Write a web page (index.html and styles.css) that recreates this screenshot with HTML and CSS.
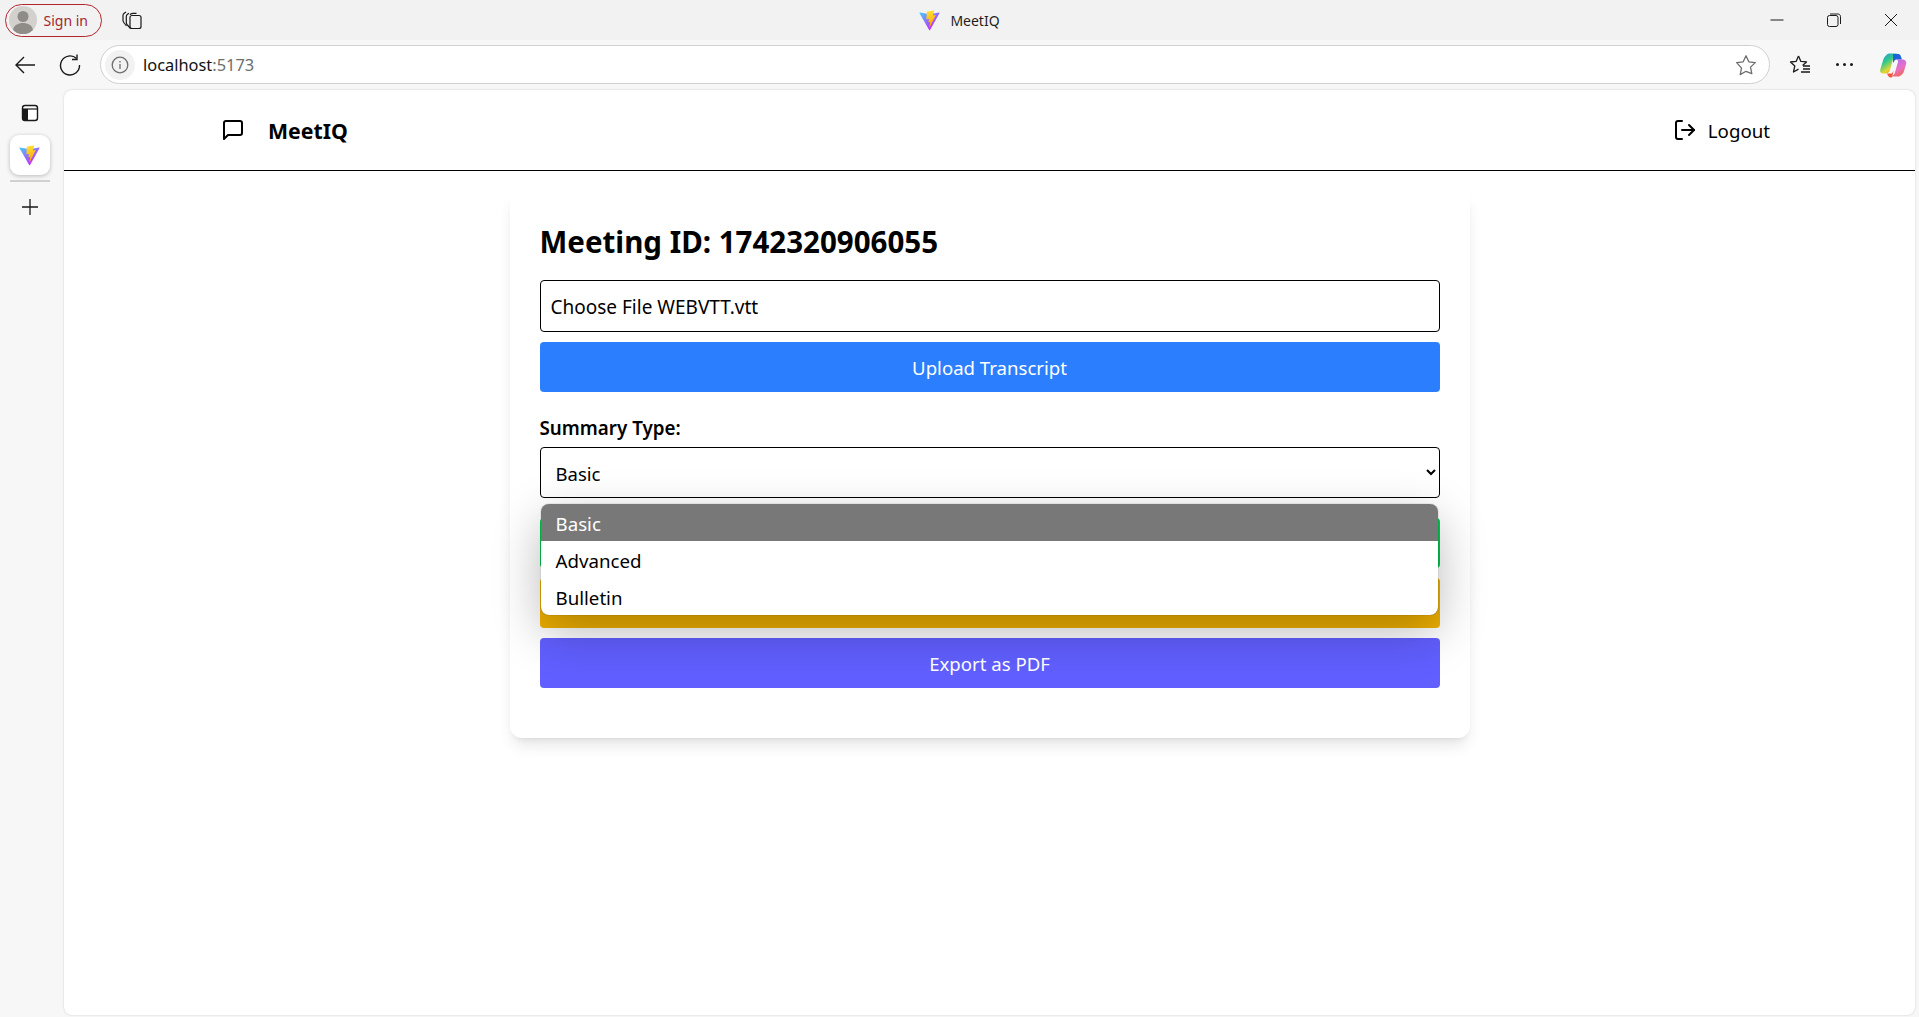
FILE: index.html
```html
<!DOCTYPE html>
<html lang="en">
<head>
  <meta charset="UTF-8" />
  <meta name="viewport" content="width=device-width, initial-scale=1.0"/>
  <title>MeetIQ</title>
  <link rel="stylesheet" href="styles.css">
</head>
<body>

  <svg class="defs" width="0" height="0">
    <defs>
      <linearGradient id="viteA" gradientUnits="userSpaceOnUse" x1="6" y1="33" x2="235" y2="344">
        <stop offset="0" stop-color="#41D1FF"/>
        <stop offset="1" stop-color="#BD34FE"/>
      </linearGradient>
      <linearGradient id="viteB" gradientUnits="userSpaceOnUse" x1="194.65" y1="8.8" x2="236" y2="292">
        <stop offset="0" stop-color="#FFEA83"/>
        <stop offset="0.08" stop-color="#FFDD35"/>
        <stop offset="1" stop-color="#FFA800"/>
      </linearGradient>
      <linearGradient id="copA" x1="0" y1="0" x2="0.6" y2="1">
        <stop offset="0" stop-color="#1f8fe8"/>
        <stop offset="0.45" stop-color="#35c98a"/>
        <stop offset="0.8" stop-color="#e6d832"/>
        <stop offset="1" stop-color="#f28a2e"/>
      </linearGradient>
      <linearGradient id="copB" x1="0.2" y1="0" x2="0.7" y2="1">
        <stop offset="0" stop-color="#b06be8"/>
        <stop offset="0.55" stop-color="#e870c8"/>
        <stop offset="1" stop-color="#f4674c"/>
      </linearGradient>
      <symbol id="vite" viewBox="0 0 410 404">
        <path d="M399.641 59.5246L215.643 388.545C211.844 395.338 202.084 395.378 198.228 388.618L10.5817 59.5563C6.38087 52.1896 12.6802 43.2665 21.0281 44.7586L205.223 77.6824C206.398 77.8924 207.601 77.8904 208.776 77.6763L389.119 44.8058C397.439 43.2894 403.768 52.1434 399.641 59.5246Z" fill="url(#viteA)"/>
        <path d="M292.965 1.5744L156.801 28.2552C154.563 28.6937 152.906 30.5903 152.771 32.8664L144.395 174.33C144.198 177.662 147.258 180.248 150.51 179.498L188.42 170.749C191.967 169.931 195.172 173.055 194.443 176.622L183.18 231.775C182.422 235.487 185.907 238.661 189.532 237.56L212.947 230.446C216.577 229.344 220.065 232.527 219.297 236.242L201.398 322.875C200.278 328.294 207.486 331.249 210.492 326.603L212.5 323.5L323.454 102.072C325.312 98.3645 322.108 94.137 318.036 94.923L279.014 102.454C275.347 103.161 272.227 99.746 273.262 96.1583L298.731 7.86689C299.767 4.27314 296.636 0.855181 292.965 1.5744Z" fill="url(#viteB)"/>
      </symbol>
    </defs>
  </svg>

  <!-- browser title bar -->
  <div class="titlebar">
    <div class="titlebar-left">
      <div class="signin">
        <svg class="avatar" width="28" height="28" viewBox="0 0 28 28">
          <circle cx="14" cy="14" r="14" fill="#d3d1ce"/>
          <circle cx="14" cy="10.5" r="5.5" fill="#8f8b87"/>
          <path d="M4 24c1-5 5-7 10-7s9 2 10 7a14 14 0 0 1-20 0z" fill="#8f8b87"/>
        </svg>
        <span>Sign in</span>
      </div>
      <svg class="collections" width="22" height="22" viewBox="0 0 22 22" fill="none" stroke="#1a1a1a" stroke-width="1.2">
        <rect x="9" y="6.5" width="11" height="13" rx="2"/>
        <path d="M9 5.8l.6-.6c.7-.7 1.4-.9 2.4-.9h3.5"/>
        <path d="M9.5 19.5L6 15.5c-.5-.6-.7-1-.7-1.9V7.5c0-1 .4-1.6 1.2-2.2l1.4-1.1"/>
        <path d="M5.5 17L2.8 13.5c-.5-.7-.8-1.2-.8-2V6.5c0-1 .4-1.6 1.2-2.2l1.8-1.3"/>
      </svg>
    </div>
    <div class="titlebar-title">
      <svg width="21" height="21"><use href="#vite"/></svg>
      <span>MeetIQ</span>
    </div>
    <div class="window-btns">
      <svg width="14" height="14" viewBox="0 0 14 14" stroke="#1a1a1a" fill="none"><path d="M0.5 7h13"/></svg>
      <svg width="14" height="14" viewBox="0 0 14 14" stroke="#1a1a1a" fill="none"><rect x="0.5" y="2.5" width="10.5" height="11" rx="2"/><path d="M3 1h8c1.200 0 2.500 1 2.500 2.500V11"/></svg>
      <svg width="14" height="14" viewBox="0 0 14 14" stroke="#1a1a1a" fill="none"><path d="M1 1l12 12M13 1L1 13"/></svg>
    </div>
  </div>

  <!-- address bar row -->
  <div class="toolbar">
    <svg class="tool-icon" width="22" height="22" viewBox="0 0 22 22" fill="none" stroke="#1a1a1a" stroke-width="1.4"><path d="M21 11H2M10 3l-8 8 8 8"/></svg>
    <svg class="tool-icon" width="22" height="22" viewBox="0 0 22 22" fill="none" stroke="#1a1a1a" stroke-width="1.4"><path d="M17.500 4.500a9.500 9.500 0 1 0 3 6.500"/><path d="M18 0.500v5h-5"/></svg>
    <div class="addressbar">
      <div class="info-badge">
        <svg width="18" height="18" viewBox="0 0 18 18" fill="none" stroke="#6e6e6e" stroke-width="1.300"><circle cx="9" cy="9" r="7.800"/><path d="M9 8v5M9 5v1.400"/></svg>
      </div>
      <span class="url">localhost<span class="port">:5173</span></span>
      <svg class="star" width="22" height="22" viewBox="0 0 22 22" fill="none" stroke="#6e6e6e" stroke-width="1.300"><path d="M11 1.800l2.800 6 6.500.8-4.800 4.500 1.300 6.500L11 17.300l-5.800 3.300 1.300-6.500L1.700 8.600l6.500-.8z" stroke-linejoin="round"/></svg>
    </div>
    <svg class="tool-icon fav" width="22" height="22" viewBox="0 0 22 22" fill="none" stroke="#1a1a1a" stroke-width="1.300"><path d="M9.500 2l2.400 5.400 5.600.5-3.900 3.600" stroke-linejoin="round"/><path d="M9.500 2L7.100 7.400l-5.600.6 4.300 3.900-1.300 6.100 5-2.900" stroke-linejoin="round"/><path d="M14 12h7M14 15h7M12 18h9"/></svg>
    <div class="dots"><i></i><i></i><i></i></div>
    <svg class="copilot" width="28" height="28" viewBox="0 0 28 28">
      <path d="M7 4.500c1-1.500 2.500-2 4-2h7.500c-2 .5-3.500 2-4.200 4.500L11 19c-.5 2-2.500 3.500-4.500 3.500H4c-2 0-3.300-1.800-2.800-3.800L4 9.500c.5-2 1.500-3.700 3-5z" fill="url(#copA)"/>
      <path d="M14 3h5c1.200 0 2 .5 2.500 1.500L23 8.500h-5c-1.500 0-2.500.5-3 2L14 12z" fill="#1e63d8"/>
      <path d="M16 8.500h7.500c2.500 0 4.200 1.800 3.700 4.300l-2 6.700c-.7 2.800-2.600 5-5.200 6H12c2-.5 3.400-2 4-4.200l3-10.300c.3-1 0-2.500-3-2.500z" fill="url(#copB)"/>
      <path d="M8 22.500h5l1.500-3-1 5.500c-.3 1-1 1.500-2 1.500-1.500 0-2.800-2-3.500-4z" fill="#ee5a3a"/>
    </svg>
  </div>

  <div class="window-body">
    <!-- edge sidebar -->
    <div class="rail">
      <svg class="rail-top" width="20" height="20" viewBox="0 0 20 20">
        <rect x="2.500" y="2.500" width="15" height="15" rx="2.500" fill="#fff" stroke="#1a1a1a" stroke-width="1.400"/>
        <path d="M2.500 6h15" stroke="#1a1a1a" stroke-width="1.200"/>
        <path d="M2.500 6H8v11.500H5A2.500 2.500 0 0 1 2.500 15z" fill="#1a1a1a"/>
      </svg>
      <div class="rail-tab"><svg width="21" height="21"><use href="#vite"/></svg></div>
      <div class="rail-sep"></div>
      <svg class="rail-plus" width="18" height="18" viewBox="0 0 18 18" stroke="#1a1a1a" stroke-width="1.300"><path d="M9 1v16M1 9h16"/></svg>
    </div>

    <!-- the app -->
    <div class="page">
      <header class="nav">
        <div class="brand">
          <svg width="24" height="24" viewBox="0 0 24 24" fill="none" stroke="#000" stroke-width="2" stroke-linecap="round" stroke-linejoin="round"><path d="M21 15a2 2 0 0 1-2 2H7l-4 4V5a2 2 0 0 1 2-2h14a2 2 0 0 1 2 2z"/></svg>
          <span>MeetIQ</span>
        </div>
        <div class="logout">
          <svg width="24" height="24" viewBox="0 0 24 24" fill="none" stroke="#000" stroke-width="2" stroke-linecap="round" stroke-linejoin="round"><path d="M9 21H5a2 2 0 0 1-2-2V5a2 2 0 0 1 2-2h4"/><path d="m16 17 5-5-5-5"/><path d="M21 12H9"/></svg>
          <span>Logout</span>
        </div>
      </header>

      <main class="card">
        <h2>Meeting ID: 1742320906055</h2>
        <div class="file-input">Choose File WEBVTT.vtt</div>
        <button class="btn btn-blue">Upload Transcript</button>

        <label class="field-label" for="summaryType">Summary Type:</label>
        <div class="select-wrap">
          <select id="summaryType" class="select">
            <option>Basic</option>
            <option>Advanced</option>
            <option>Bulletin</option>
          </select>
          <ul class="dropdown">
            <li class="selected">Basic</li>
            <li>Advanced</li>
            <li>Bulletin</li>
          </ul>
        </div>

        <button class="btn btn-green">Generate Summary</button>
        <button class="btn btn-yellow">Send Email</button>
        <button class="btn btn-indigo">Export as PDF</button>
      </main>
    </div>
  </div>

</body>
</html>
```

FILE: styles.css
```css
* {
  box-sizing: border-box;
}
html, body {
  height: 100%;
}
body {
  margin: 0;
  overflow: hidden;
  background: #f7f7f7;
  font-family: "Noto Sans", "Open Sans", sans-serif;
  color: #000;
  display: flex;
  flex-direction: column;
}
.defs {
  position: absolute;
}

/* title bar */
.titlebar {
  height: 40px;
  flex: none;
  background: #f2f2f2;
  display: grid;
  grid-template-columns: 1fr auto 1fr;
  align-items: center;
}
.titlebar-left {
  display: flex;
  align-items: center;
  padding-left: 5px;
  gap: 19px;
}
.signin {
  width: 97px;
  height: 33px;
  border: 1.500px solid #b3262e;
  border-radius: 17px;
  display: flex;
  align-items: center;
  padding-left: 2.500px;
  gap: 7px;
  font-size: 14px;
  color: #a4262c;
}
.titlebar-title {
  display: flex;
  align-items: center;
  gap: 10px;
  font-size: 14px;
  color: #1f1f1f;
}
.window-btns {
  justify-self: end;
  display: flex;
  align-items: center;
  gap: 43px;
  padding-right: 21px;
}

/* toolbar */
.toolbar {
  height: 50px;
  flex: none;
  display: flex;
  align-items: center;
  padding: 0 8px 1px 14px;
}
.tool-icon {
  margin-right: 23px;
}
.addressbar {
  width: 1670px;
  height: 39px;
  margin-left: -4px;
  background: #fff;
  border: 1px solid #d0d0d0;
  border-radius: 20px;
  display: flex;
  align-items: center;
  padding: 0 12px 0 4px;
}
.info-badge {
  width: 30px;
  height: 30px;
  border-radius: 50%;
  background: #f2f2f2;
  display: flex;
  align-items: center;
  justify-content: center;
}
.url {
  margin-left: 8px;
  font-size: 16.400px;
  color: #111;
  flex: 1;
}
.port {
  color: #6e6e6e;
}
.fav {
  margin: 0 0 0 19px;
}
.dots {
  display: flex;
  gap: 4px;
  margin-left: 25px;
}
.dots i {
  width: 3px;
  height: 3px;
  border-radius: 50%;
  background: #1a1a1a;
}
.copilot {
  margin-left: 26px;
}

/* window body */
.window-body {
  flex: 1;
  display: flex;
  min-height: 0;
}
.rail {
  width: 64px;
  flex: none;
  display: flex;
  flex-direction: column;
  align-items: center;
  padding: 13px 5px 0 0;
}
.rail-tab {
  width: 40px;
  height: 40px;
  margin-top: 12px;
  background: #fff;
  border-radius: 9px;
  box-shadow: 0 1px 4px rgba(0, 0, 0, 0.25);
  display: flex;
  align-items: center;
  justify-content: center;
}
.rail-sep {
  width: 40px;
  height: 2px;
  margin-top: 5px;
  background: #d0d0d0;
}
.rail-plus {
  margin-top: 16px;
}
.page {
  flex: 1;
  background: #fff;
  border-radius: 8px;
  margin-right: 4px;
  margin-bottom: 2px;
  box-shadow: 0 0 2px rgba(0, 0, 0, 0.2);
  min-width: 0;
}

/* nav */
.nav {
  height: 81px;
  border-bottom: 1px solid #000;
  display: flex;
  align-items: center;
  justify-content: space-between;
  padding: 0 145px 0 157px;
}
.brand {
  display: flex;
  align-items: center;
  gap: 23px;
  font-size: 21.300px;
  font-weight: 700;
}
.logout {
  display: flex;
  align-items: center;
  gap: 11px;
  font-size: 18.700px;
}

/* card */
.card {
  width: 960px;
  margin: 19px auto 0;
  padding: 32px 30px 50px;
  background: #fff;
  border-radius: 12px;
  box-shadow: 0 10px 15px -3px rgba(0, 0, 0, 0.1), 0 4px 6px -4px rgba(0, 0, 0, 0.1);
}
h2 {
  margin: 0 0 18px;
  font-size: 29.500px;
  line-height: 40px;
  font-weight: 700;
}
.file-input {
  height: 52px;
  border: 1px solid #000;
  border-radius: 4px;
  padding: 1px 10px 0;
  display: flex;
  align-items: center;
  font-size: 19px;
}
.btn {
  display: block;
  width: 100%;
  height: 50px;
  border: none;
  border-radius: 4px;
  color: #fff;
  font-family: inherit;
  font-size: 18.600px;
  margin-top: 10px;
}
.btn-blue {
  background: #2b7fff;
}
.btn-green {
  background: #00c950;
  margin-top: 20px;
}
.btn-yellow {
  background: #f0b100;
}
.btn-indigo {
  background: #615fff;
}
.field-label {
  display: block;
  margin-top: 22px;
  font-size: 18.800px;
  line-height: 28px;
  font-weight: 600;
}
.select-wrap {
  position: relative;
  margin-top: 5px;
}
.select {
  display: block;
  width: 100%;
  height: 51px;
  border: 1px solid #000;
  border-radius: 4px;
  background: #fff;
  color: #000;
  padding: 1px 11px 0;
  font-family: inherit;
  font-size: 18.500px;
}

/* opened select list, sits over the buttons */
.dropdown {
  position: absolute;
  left: 1px;
  right: 2px;
  top: 57px;
  margin: 0;
  padding: 0;
  list-style: none;
  background: #fff;
  border-radius: 8px;
  overflow: hidden;
  box-shadow: 0 0 1px rgba(0, 0, 0, 0.6), 0 16px 48px rgba(0, 0, 0, 0.28);
  font-size: 18.700px;
  z-index: 5;
}
.dropdown li {
  height: 37px;
  padding: 1px 15px 0;
  display: flex;
  align-items: center;
}
.dropdown li.selected {
  background: #787878;
  color: #fff;
}
```
